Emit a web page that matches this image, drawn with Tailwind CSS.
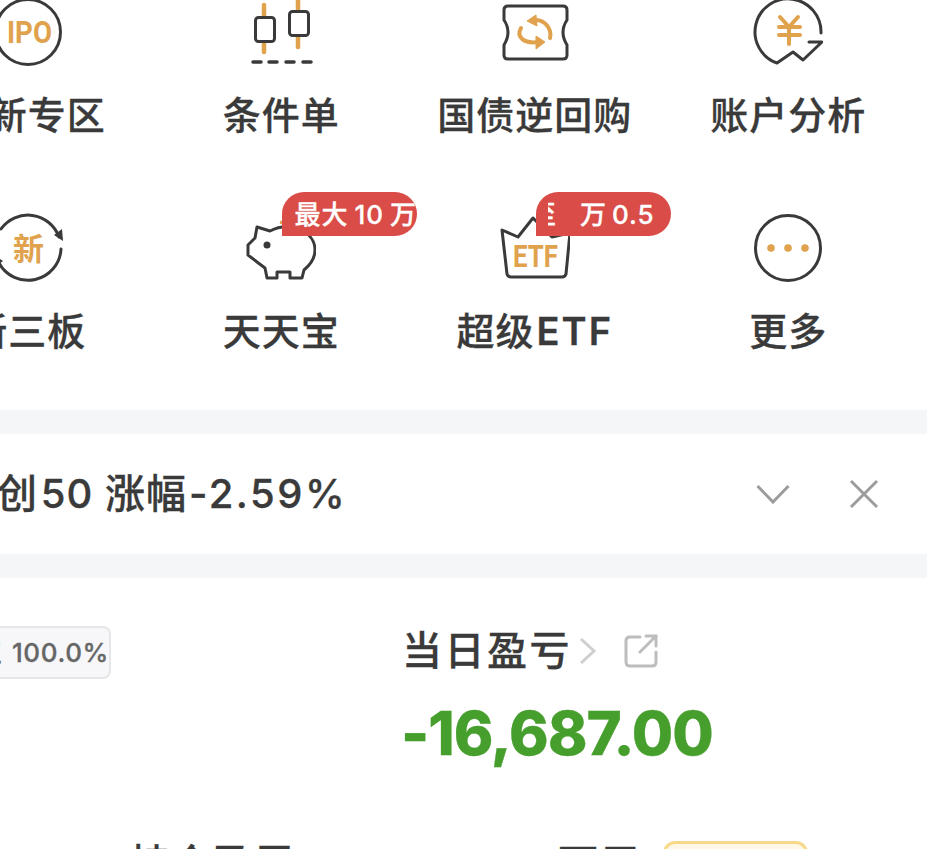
<!DOCTYPE html>
<html lang="zh-CN">
<head>
  <meta charset="UTF-8" />
  <meta name="viewport" content="width=device-width, initial-scale=1.0"/>
  <title>交易</title>
  <script src="https://cdn.jsdelivr.net/npm/@tailwindcss/browser@4"></script>
</head>
<body class="bg-white overflow-hidden">
<div class="w-[927px] h-[849px] overflow-hidden font-['Inter','Noto_Sans_CJK_SC',sans-serif] text-[#3a3a3a] [-webkit-text-stroke-width:0.3px]">

  <!-- 功能入口 -->
  <div class="h-[413px] -mt-[3px] ml-[-99px] w-[1014px] grid grid-cols-4 grid-rows-[216px_197px]">

    <div class="relative flex flex-col items-center">
      <svg class="w-[70px] h-[70px]" viewBox="0 0 70 70" fill="none">
        <circle cx="35" cy="35" r="32.5" stroke="#3a3a3a" stroke-width="3"/>
        <text x="14" y="46" textLength="45" lengthAdjust="spacingAndGlyphs" font-family="Roboto, sans-serif" font-size="31" font-weight="700" fill="#e0a24d">IPO</text>
      </svg>
      <span class="mt-[26px] text-[38px] leading-[44px] font-medium tracking-[1px] whitespace-nowrap">打新专区</span>
    </div>

    <div class="relative flex flex-col items-center">
      <svg class="w-[70px] h-[70px]" viewBox="0 0 70 70" fill="none" stroke-linecap="round">
        <path d="M18 8V55M52 3V50" stroke="#e0a24d" stroke-width="4.5"/>
        <rect x="9.5" y="20.5" width="19" height="24" rx="3" fill="#fff" stroke="#3a3a3a" stroke-width="3"/>
        <rect x="43.5" y="14.5" width="19" height="24" rx="3" fill="#fff" stroke="#3a3a3a" stroke-width="3"/>
        <path d="M7 65H15M23 65H31M40 65H48M57 65H65" stroke="#3a3a3a" stroke-width="3.5"/>
      </svg>
      <span class="mt-[26px] text-[38px] leading-[44px] font-medium tracking-[1px]">条件单</span>
    </div>

    <div class="relative flex flex-col items-center">
      <svg class="w-[70px] h-[70px]" viewBox="0 0 70 70" fill="none">
        <path d="M8 9H63Q67 9 67 13V23Q59 35 67 48V58Q67 62 63 62H8Q4 62 4 58V48Q12 35 4 23V13Q4 9 8 9Z" stroke="#3a3a3a" stroke-width="3"/>
        <path d="M50 41C52 32 45 22 34 23M21 31C16 40 24 47 38 45" stroke="#e0a24d" stroke-width="4" stroke-linecap="round"/>
        <path d="M27 24L36 18L37 29ZM45 45L36 39L36 52Z" fill="#e0a24d" stroke="#e0a24d" stroke-linejoin="round"/>
      </svg>
      <span class="mt-[26px] text-[38px] leading-[44px] font-medium tracking-[1px]">国债逆回购</span>
    </div>

    <div class="relative flex flex-col items-center">
      <svg class="w-[70px] h-[70px]" viewBox="0 0 70 70" fill="none" stroke-linecap="round" stroke-linejoin="round">
        <path d="M68 36A33 33 0 1 0 24 66L40 55L50 63L69 45H56" stroke="#3a3a3a" stroke-width="3"/>
        <path d="M27 20L36 30L45 20M26 30H47M26 38H47M36 30V47" stroke="#e0a24d" stroke-width="4"/>
      </svg>
      <span class="mt-[26px] text-[38px] leading-[44px] font-medium tracking-[1px]">账户分析</span>
    </div>

    <div class="relative flex flex-col items-center">
      <svg class="w-[70px] h-[70px]" viewBox="0 0 70 70" fill="none" stroke-linecap="round">
        <path d="M66 24A33 33 0 0 0 8 16M68 36A33 33 0 0 1 6 50" stroke="#3a3a3a" stroke-width="3"/>
        <path d="M70 28L61 22L69 16ZM1 42L10 48L2 54Z" fill="#3a3a3a"/>
        <text x="35.5" y="47" text-anchor="middle" font-family="Noto Sans CJK SC" font-size="31" font-weight="700" fill="#e0a24d">新</text>
      </svg>
      <span class="mt-[26px] text-[38px] leading-[44px] font-medium tracking-[1px] whitespace-nowrap">新三板</span>
    </div>

    <div class="relative flex flex-col items-center">
      <svg class="w-[70px] h-[70px]" viewBox="0 0 70 70" fill="none" stroke-linejoin="round">
        <path d="M35 11L36 8" stroke="#e0a24d" stroke-width="3"/>
        <path d="M11 14L24 18C44 8 69 18 69 37C69 46 64 52 58 57L56 65H44V59H31V65H21L19 55L11 49L2 42V32L9 25Z" stroke="#3a3a3a" stroke-width="3"/>
        <circle cx="21" cy="32" r="3.5" fill="#3a3a3a"/>
      </svg>
      <span class="mt-[26px] text-[38px] leading-[44px] font-medium tracking-[1px]">天天宝</span>
      <span class="absolute left-[127px] top-[-21px] w-[135px] h-[44px] bg-[#d94c47] rounded-t-[22px] rounded-br-[22px] flex items-center pl-[13px] text-white text-[26px] font-medium tracking-[1px] [word-spacing:-2px] whitespace-nowrap overflow-hidden">最大 10 万</span>
    </div>

    <div class="relative flex flex-col items-center">
      <svg class="w-[70px] h-[70px]" viewBox="0 0 70 70" fill="none" stroke-linejoin="round">
        <path d="M2 17L18 24L33 5L52 24L70 20L66 61Q65 64 62 64H11Q8 64 7 61Z" stroke="#3a3a3a" stroke-width="3"/>
        <text x="13" y="54" textLength="45" lengthAdjust="spacingAndGlyphs" font-family="Roboto, sans-serif" font-size="32" font-weight="700" fill="#e0a24d">ETF</text>
      </svg>
      <span class="mt-[26px] text-[38px] leading-[44px] font-medium tracking-[1px] [word-spacing:-9px] whitespace-nowrap">超级 <span class="font-semibold tracking-[2px]">ETF</span></span>
      <span class="absolute left-[128px] top-[-21px] w-[135px] h-[44px] bg-[#d94c47] rounded-t-[22px] rounded-br-[22px] flex items-center text-white text-[26px] font-medium tracking-[1px] [word-spacing:-3px] whitespace-nowrap">
        <span class="ml-[12px] w-[9px] overflow-hidden flex justify-end"><span class="shrink-0">至</span></span>
        <span class="ml-[23px]">万 0.5</span>
      </span>
    </div>

    <div class="relative flex flex-col items-center">
      <svg class="w-[70px] h-[70px]" viewBox="0 0 70 70" fill="none">
        <circle cx="35" cy="35" r="32.5" stroke="#3a3a3a" stroke-width="3"/>
        <circle cx="18" cy="35" r="3.8" fill="#e0a24d"/><circle cx="35" cy="35" r="3.8" fill="#e0a24d"/><circle cx="52" cy="35" r="3.8" fill="#e0a24d"/>
      </svg>
      <span class="mt-[26px] text-[38px] leading-[44px] font-medium tracking-[1px]">更多</span>
    </div>
  </div>

  <!-- 资讯条 -->
  <div class="h-[168px] border-y-[24px] border-[#f5f6f8] flex items-center justify-between pr-[48px]">
    <span class="-ml-[44px] text-[40px] font-medium tracking-[1px] whitespace-nowrap"><span class="[word-spacing:-9px]">科创 50</span> 涨幅<span class="ml-[2px] tracking-[2.5px]">-2.59%</span></span>
    <div class="flex items-center gap-[59px]">
      <svg class="w-[34px] h-[20px]" viewBox="0 0 34 20" fill="none"><path d="M1.5 2L17 18L32.5 2" stroke="#9c9c9c" stroke-width="3"/></svg>
      <svg class="w-[30px] h-[30px]" viewBox="0 0 30 30" fill="none"><path d="M2 2L28 28M28 2L2 28" stroke="#9c9c9c" stroke-width="3"/></svg>
    </div>
  </div>

  <!-- 账户数据 -->
  <div class="flex">
    <div class="w-[402px] pt-[48px]">
      <span class="flex items-center justify-end w-[151px] h-[53px] -ml-[40px] bg-[#f7f7f9] border-2 border-[#e6e6e8] rounded-[8px] text-[#666] text-[26px] font-medium tracking-[0.6px] [word-spacing:2px] whitespace-nowrap">仓位 100.0%</span>
    </div>
    <div class="pt-[49px]">
      <div class="flex items-center h-[48px]">
        <span class="text-[40px] leading-[48px] font-medium tracking-[2.5px] whitespace-nowrap">当日盈亏</span>
        <svg class="ml-[7px] w-[18px] h-[28px]" viewBox="0 0 18 28" fill="none"><path d="M2 2L15 14L2 26" stroke="#cfcfcf" stroke-width="3"/></svg>
        <svg class="ml-[27px] w-[34px] h-[34px]" viewBox="0 0 34 34" fill="none" stroke="#bdbdbd" stroke-width="3" stroke-linecap="round"><path d="M16 3H6Q2 3 2 7V28Q2 32 6 32H28Q32 32 32 28V18M16 18L32 2M22 2H32V12"/></svg>
      </div>
      <div class="mt-[24px] -ml-[1px] text-[#469e2c] text-[60px] leading-[68px] font-extrabold tracking-[-1px] whitespace-nowrap">-16,687.00</div>
    </div>
  </div>

  <!-- 下一行，被屏幕底部裁掉 -->
  <div class="mt-[73px] flex items-start">
    <span class="ml-[130px] w-[428px] text-[40px] leading-[48px] font-medium tracking-[1.5px] whitespace-nowrap">持仓盈亏</span>
    <span class="w-[105px] text-[40px] leading-[48px] font-medium tracking-[1.5px] whitespace-nowrap">可用</span>
    <span class="w-[145px] h-[60px] mt-[1px] border-[3px] border-[#f8d98a] bg-[#fff8e6] rounded-[12px]"></span>
  </div>
</div>
</body>
</html>
